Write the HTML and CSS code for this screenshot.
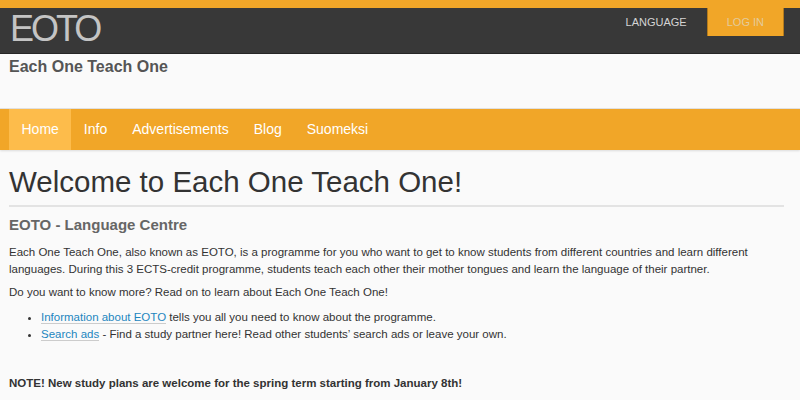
FILE: index.html
```html
<!DOCTYPE html>
<html lang="en">
<head>
<meta charset="utf-8">
<title>Each One Teach One</title>
<link rel="stylesheet" href="styles.css">
</head>
<body>
<div class="top-strip"></div>
<header class="topbar">
  <div class="topbar-inner">
    <a class="logo" href="#">EOTO</a>
    <nav class="util-nav">
      <a class="util-link" href="#">LANGUAGE</a>
      <a class="util-link login" href="#">LOG IN</a>
    </nav>
  </div>
</header>
<div class="site-title">
  <div class="container">
    <div class="site-name">Each One Teach One</div>
  </div>
</div>
<nav class="main-nav">
  <ul class="container nav-list">
    <li><a class="nav-link active" href="#">Home</a></li>
    <li><a class="nav-link" href="#">Info</a></li>
    <li><a class="nav-link" href="#">Advertisements</a></li>
    <li><a class="nav-link" href="#">Blog</a></li>
    <li><a class="nav-link" href="#">Suomeksi</a></li>
  </ul>
</nav>
<main class="container content">
  <h1 class="page-title">Welcome to Each One Teach One!</h1>
  <h2 class="section-title">EOTO - Language Centre</h2>
  <p class="para">Each One Teach One, also known as EOTO, is a programme for you who want to get to know students from different countries and learn different languages. During this 3 ECTS-credit programme, students teach each other their mother tongues and learn the language of their partner.</p>
  <p class="para">Do you want to know more? Read on to learn about Each One Teach One!</p>
  <ul class="links">
    <li><a class="text-link" href="#">Information about EOTO</a> tells you all you need to know about the programme.</li>
    <li><a class="text-link" href="#">Search ads</a> - Find a study partner here! Read other students’ search ads or leave your own.</li>
  </ul>
  <p class="para note">NOTE! New study plans are welcome for the spring term starting from January 8th!</p>
</main>
</body>
</html>
```

FILE: styles.css
```css
* { box-sizing: border-box; }

html, body {
  margin: 0;
  padding: 0;
  background: #fafafa;
  font-family: "Liberation Sans", Arial, Helvetica, sans-serif;
  color: #333;
}

a { text-decoration: none; }

.container {
  margin: 0 16px 0 9px;
}

.top-strip {
  height: 8px;
  background: #f1a628;
}

.topbar {
  height: 46px;
  background: #383838;
  border-bottom: 1px solid #262626;
}

.topbar-inner {
  display: flex;
  justify-content: space-between;
  align-items: flex-start;
  margin: 0 16px 0 10px;
}

.logo {
  font-size: 36px;
  line-height: 42px;
  letter-spacing: -3px;
  color: #c4c4c4;
}

.util-nav {
  display: flex;
  align-items: flex-start;
}

.util-link {
  display: block;
  font-size: 11px;
  line-height: 28px;
  color: #d4d4d4;
  padding: 0 20px;
}

.util-link.login {
  background: #f1a628;
  color: #e4cb9c;
  padding: 0 19px;
  border-left: 1px solid #b57b1c;
  border-right: 1px solid #b57b1c;
}

.site-title {
  height: 55px;
  border-bottom: 1px solid #e2e2e2;
}

.site-name {
  padding-top: 3px;
  font-size: 16px;
  line-height: 20px;
  font-weight: bold;
  color: #555;
}

.main-nav {
  background: #f1a628;
  box-shadow: 0 1px 2px rgba(0, 0, 0, 0.12);
}

.nav-list {
  list-style: none;
  padding: 0;
  display: flex;
}

.nav-link {
  display: block;
  padding: 0 12.5px;
  font-size: 14px;
  line-height: 41px;
  color: #fff;
}

.nav-link.active {
  background: #fdbc4b;
}

.content {
  padding-top: 1px;
}

.page-title {
  margin: 13px 0 0;
  padding-bottom: 5px;
  border-bottom: 2px solid #e3e3e3;
  font-size: 29.5px;
  line-height: 36px;
  font-weight: normal;
  color: #333;
}

.section-title {
  margin: 8px 0 0;
  font-size: 15px;
  line-height: 20px;
  font-weight: bold;
  color: #666;
}

.para {
  margin: 9px 0 0;
  font-size: 11.5px;
  line-height: 17px;
}

.para + .para {
  margin-top: 6px;
}

.links {
  margin: 8px 0 0;
  padding-left: 32px;
  font-size: 11.5px;
  line-height: 17px;
}

.text-link {
  color: #1d86bf;
  border-bottom: 1px solid #cccccc;
}

.para.note {
  margin-top: 32px;
  font-weight: bold;
}
```
